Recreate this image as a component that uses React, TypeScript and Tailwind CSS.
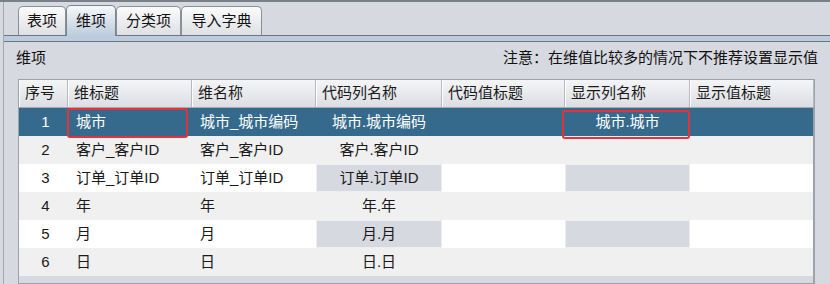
const font = '[font-family:"Liberation_Sans","Noto_Sans_CJK_SC",sans-serif]';

const cols = 'grid grid-cols-[49px_124px_124px_126px_123px_125px_124px]';

const headers = ['序号', '维标题', '维名称', '代码列名称', '代码值标题', '显示列名称', '显示值标题'];

const rows = [
  { n: 1, title: '城市', name: '城市_城市编码', code: '城市.城市编码', disp: '城市.城市' },
  { n: 2, title: '客户_客户ID', name: '客户_客户ID', code: '客户.客户ID', disp: '' },
  { n: 3, title: '订单_订单ID', name: '订单_订单ID', code: '订单.订单ID', disp: '' },
  { n: 4, title: '年', name: '年', code: '年.年', disp: '' },
  { n: 5, title: '月', name: '月', code: '月.月', disp: '' },
  { n: 6, title: '日', name: '日', code: '日.日', disp: '' },
];

const tabs = [
  { label: '表项', w: 'w-[48px]' },
  { label: '维项', w: 'w-[50px]', active: true },
  { label: '分类项', w: 'w-[65px]' },
  { label: '导入字典', w: 'w-[81px]' },
];

function Tab({ label, w, active }: { label: string; w: string; active?: boolean }) {
  if (active) {
    return (
      <div
        className={`${w} h-[31px] -mb-px relative z-10 flex items-center justify-center rounded-t-[5px] border border-b-0 border-[#7d838c] bg-gradient-to-b from-[#f6f8fb] to-[#bccbdd] text-[15px] text-[#111]`}
      >
        {label}
      </div>
    );
  }
  return (
    <div
      className={`${w} h-[29px] flex items-center justify-center rounded-t-[5px] border border-b-0 border-[#8a9098] bg-gradient-to-b from-[#fbfbfc] to-[#dfe0e3] text-[15px] text-[#111]`}
    >
      {label}
    </div>
  );
}

export default function App() {
  return (
    <div className={`w-[830px] h-[284px] overflow-hidden bg-[#d6d9df] border-t-2 border-[#7b8088] ${font}`}>
      <div className="ml-[3px] h-full border-l border-[#a4a8b0] flex flex-col">
        {/* 页签 */}
        <div className="h-[33px] flex items-end pl-[14px]">
          {tabs.map(t => (
            <Tab key={t.label} {...t} />
          ))}
        </div>
        <div className="h-[7px] border-t border-b border-[#6f757e] bg-[#bccbdd]" />

        {/* 标题行 */}
        <div className="h-[32px] flex items-center justify-between pl-[12px] pr-[12px] text-[15px] text-[#111]">
          <span>维项</span>
          <span>注意：在维值比较多的情况下不推荐设置显示值</span>
        </div>

        {/* 表格 */}
        <div className="mt-[5px] ml-[14px] w-[797px] flex-1 border border-r-2 border-[#9da1a9] bg-[#d6d9df]">
          <div className={`${cols} h-[28px] bg-gradient-to-b from-[#f4f5f7] to-[#dcdee3] border-b border-[#a6aab1]`}>
            {headers.map(h => (
              <div
                key={h}
                className="flex items-center pl-[6px] text-[15px] text-[#1a1a1a] border-r border-[#b5b9c0] shadow-[inset_1px_0_0_#ffffff]"
              >
                {h}
              </div>
            ))}
          </div>

          {rows.map(r => {
            const selected = r.n === 1;
            const alt = r.n % 2 === 0;
            const rowBg = selected ? 'bg-[#356a8d]' : alt ? 'bg-[#f0f0f0]' : 'bg-white';
            const text = selected ? 'text-white' : 'text-[#1a1a1a]';
            const grayCell = !selected && !alt ? 'bg-[#d6d9e0] border border-[#eceef1]' : '';
            return (
              <div key={r.n} className={`${cols} h-[28px] ${rowBg} ${text} text-[15px]`}>
                <div className="flex items-center justify-center pl-[4px]">{r.n}</div>
                <div className="relative flex items-center pl-[8px]">
                  {r.title}
                  {selected && (
                    <div className="absolute left-[-1px] top-0 w-[121px] h-[30px] border-2 border-[#e2323a] rounded-[3px]" />
                  )}
                </div>
                <div className="flex items-center pl-[8px]">{r.name}</div>
                <div className={`flex items-center justify-center ${grayCell}`}>{r.code}</div>
                <div />
                <div className={`relative flex items-center justify-center ${grayCell}`}>
                  {r.disp}
                  {selected && (
                    <div className="absolute left-[-3px] top-[2px] w-[128px] h-[29px] border-2 border-[#e2323a] rounded-[3px]" />
                  )}
                </div>
                <div />
              </div>
            );
          })}
        </div>
      </div>
    </div>
  );
}
